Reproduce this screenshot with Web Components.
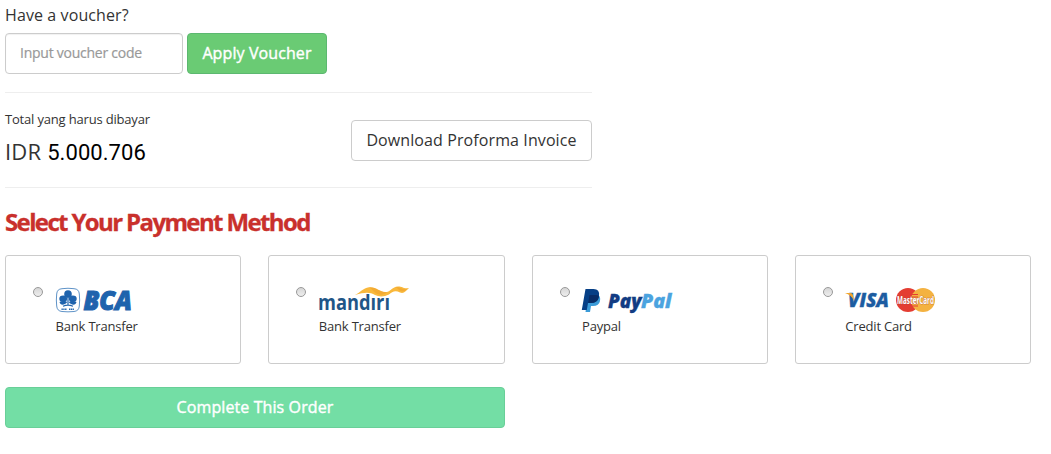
<!DOCTYPE html>
<html lang="id">
<head>
<meta charset="utf-8">
<title>Payment</title>
<style>
  body {
    margin: 0;
    background: #fff;
    color: #333;
    font-family: "Open Sans", "Noto Sans", sans-serif;
    font-size: 16px;
  }
</style>
</head>
<body>
<payment-page></payment-page>

<script>
const define = (name, html) => {
  const template = document.createElement("template");
  template.innerHTML = html;

  customElements.define(name, class extends HTMLElement {
    constructor() {
      super();
      this.root = this.attachShadow({ mode: "open" });
      this.root.appendChild(template.content.cloneNode(true));
    }
  });
};

const logoStyle = /* html */ `
  <style>
    :host {
      display: block;
    }

    svg {
      display: block;
      overflow: visible;
      font-family: "Open Sans", sans-serif;
    }
  </style>
`;

define("action-button", /* html */ `
  <style>
    :host {
      display: block;
      flex: none;
    }

    button {
      display: block;
      width: 100%;
      height: 41px;
      box-sizing: border-box;
      padding: 0 0 2px;
      border: 1px solid var(--button-border, #ccc);
      border-radius: 4px;
      background: var(--button-bg, #fff);
      color: var(--button-color, #333);
      font: inherit;
      letter-spacing: 0.1px;
      white-space: nowrap;
      -webkit-text-stroke: var(--button-stroke, 0);
    }
  </style>
  <button type="button"><slot></slot></button>
`);

define("voucher-form", /* html */ `
  <style>
    :host {
      display: block;
      height: 92px;
    }

    label {
      display: block;
      height: 33px;
      line-height: 30px;
      letter-spacing: 0.1px;
    }

    .row {
      display: flex;
      gap: 4px;
    }

    input {
      width: 178px;
      height: 41px;
      box-sizing: border-box;
      padding: 0 15px 2px 14px;
      border: 1px solid #ccc;
      border-radius: 4px;
      font: inherit;
      font-size: 14px;
      letter-spacing: -0.25px;
      box-shadow: inset 0 1px 1px rgba(0, 0, 0, 0.06);
    }

    input::placeholder {
      color: #999;
      -webkit-text-stroke: 0.2px;
    }

    action-button {
      width: 140px;
      --button-bg: #6acb74;
      --button-border: #5cb870;
      --button-color: #fff;
      --button-stroke: 0.4px;
    }
  </style>
  <label for="code">Have a voucher?</label>
  <div class="row">
    <input id="code" placeholder="Input voucher code">
    <action-button>Apply Voucher</action-button>
  </div>
`);

define("order-total", /* html */ `
  <style>
    :host {
      display: flex;
      justify-content: space-between;
      height: 96px;
      box-sizing: border-box;
      border: solid #eee;
      border-width: 1px 0;
    }

    .label {
      height: 34px;
      margin-top: 17px;
      font-size: 13px;
      letter-spacing: -0.18px;
      line-height: 18px;
    }

    .amount {
      font-size: 22px;
      line-height: 15px;
      letter-spacing: 0.2px;
      white-space: nowrap;
    }

    .amount b {
      color: #000;
      font: 400 22px/15px Roboto, sans-serif;
      letter-spacing: 0.05px;
    }

    action-button {
      width: 241px;
      margin-top: 27px;
    }
  </style>
  <div>
    <div class="label">Total yang harus dibayar</div>
    <div class="amount">IDR <b>5.000.706</b></div>
  </div>
  <action-button>Download Proforma Invoice</action-button>
`);

define("payment-option", /* html */ `
  <style>
    :host {
      display: flex;
      height: 109px;
      box-sizing: border-box;
      padding: 31px 0 0 27px;
      border: 1px solid #ccc;
      border-radius: 3px;
    }

    input {
      appearance: none;
      flex: none;
      width: 10px;
      height: 10px;
      box-sizing: border-box;
      margin: 0;
      border: 1px solid #999;
      border-radius: 50%;
      background: linear-gradient(#d6d6d6, #eee);
    }

    label {
      margin: 1px 0 0 12.6px;
      font-size: 13px;
      letter-spacing: -0.2px;
      line-height: 18px;
    }

    ::slotted(*) {
      height: 29px;
      letter-spacing: 0;
    }
  </style>
  <input type="radio" name="method" id="method">
  <label for="method"><slot name="logo"></slot><slot></slot></label>
`);

define("bca-logo", logoStyle + /* html */ `
  <svg width="80" height="26" viewBox="0 0 80 26" fill="#1f63ad">
    <path d="M6 .7Q12-.2 18 .7Q23 1 23.3 6Q24 12 23.3 18Q23 23 18 23.5Q12 24.2 6 23.5Q1 23 .7 18Q0 12 .7 6Q1 1 6 .7Z" fill="#fff" stroke="#4d87c1" stroke-width=".9"/>
    <circle cx="12" cy="6" r="3.8"/>
    <ellipse cx="7.2" cy="10.7" rx="3.9" ry="3.2"/>
    <ellipse cx="16.8" cy="10.7" rx="3.9" ry="3.2"/>
    <path d="M11.3 14C8 18 4 17 3.5 14C6 12.5 9.5 12.5 11.3 14ZM12.7 14C16 18 20 17 20.5 14C18 12.5 14.5 12.5 12.7 14Z"/>
    <path d="M12 8V17M7 18.3Q12 16 17 18.3" fill="none" stroke="#1f63ad" stroke-width="1.2"/>
    <path d="M5.5 21.2H11M13 21.2H18" stroke="#1f63ad" stroke-width="1.5" stroke-dasharray="1.3 .5"/>
    <text x="27.5" y="21.8" font-size="27" font-weight="800" font-style="italic" textLength="48.5" lengthAdjust="spacingAndGlyphs" stroke="#1f63ad" stroke-width="1.1">BCA</text>
  </svg>
`);

define("mandiri-logo", logoStyle + /* html */ `
  <svg width="92" height="27" viewBox="0 0 92 27">
    <text x="-1" y="22.3" font-size="20.5" font-weight="700" fill="#1f5687" textLength="72" lengthAdjust="spacingAndGlyphs">mandırı</text>
    <path d="M36 7C41 5 44 0 50-.7C58-1.5 61 5 68 4C72 3 73-1 79-1.5C84-1.5 84 1 90 0C87 3 85 6 81 4.5C76 2 73 4 70 6.5C65 9 60 9 56 7C51 4 46 4 36 7Z" fill="#f9b83c"/>
    <path d="M50-.7C58-1 61 5 68 4C64 8 59 7 56 4.5Q53 1 50-.7ZM77-1C82-1 84 3 89 .5Q84 5 80 2Z" fill="#eea12d" opacity=".6"/>
  </svg>
`);

define("paypal-logo", logoStyle + /* html */ `
  <svg width="92" height="27" viewBox="0 0 92 27">
    <path d="M6 6H15Q19 8 18 13Q17 18 11 18H9L8 24H3.5Z" fill="#3b9bd8"/>
    <path d="M3.5 1H11.5Q18 1 17 8Q16 15 8.5 15H6L4.8 22H-.2Z" fill="#063f86"/>
    <path d="M7.5 7H14Q17 7 16.9 9Q15.7 15 9 15H6.2Z" fill="#082c66"/>
    <g font-size="18.5" font-weight="800" font-style="italic" stroke-width=".3">
      <text x="26" y="20" fill="#123c83" stroke="#123c83" textLength="33.5" lengthAdjust="spacingAndGlyphs">Pay</text>
      <text x="59" y="20" fill="#4ba3df" stroke="#4ba3df" textLength="30.5" lengthAdjust="spacingAndGlyphs">Pal</text>
    </g>
  </svg>
`);

define("card-logo", logoStyle + /* html */ `
  <svg width="92" height="27" viewBox="0 0 92 27">
    <text x="3" y="19" font-size="19.5" font-weight="800" font-style="italic" fill="#1c5ca1" stroke="#1c5ca1" stroke-width=".4" textLength="41" lengthAdjust="spacingAndGlyphs">VISA</text>
    <path d="M0 5H5.5Q7.5 5 7.9 7L9.2 13Q6.5 7 0 5Z" fill="#f2a52c"/>
    <circle cx="63" cy="12" r="12" fill="#e43d32"/>
    <circle cx="78" cy="12" r="12" fill="#f4b241"/>
    <path d="M67 6.5H73M66.5 9H73M66.5 15.5H73M67 18H73" stroke="#e43d32" stroke-width="1.1"/>
    <text x="52" y="15.5" font-size="10" font-weight="700" fill="#fff" stroke="#a5453a" stroke-width=".6" paint-order="stroke" textLength="37" lengthAdjust="spacingAndGlyphs">MasterCard</text>
  </svg>
`);

define("payment-page", /* html */ `
  <style>
    :host {
      display: block;
      height: 454px;
      box-sizing: border-box;
      padding-left: 5px;
      overflow: hidden;
    }

    order-total {
      width: 587px;
    }

    h2 {
      height: 67px;
      margin: 0;
      color: #c9302c;
      font-size: 24px;
      line-height: 67px;
      letter-spacing: -1.63px;
      -webkit-text-stroke: 0.3px;
    }

    .options {
      display: grid;
      grid-template-columns: repeat(4, 1fr);
      gap: 27px;
      width: 1026px;
    }

    .complete {
      width: 500px;
      margin-top: 23px;
      --button-bg: #73dea5;
      --button-border: #69cf98;
      --button-color: #fff;
      --button-stroke: 0.4px;
    }
  </style>
  <voucher-form></voucher-form>
  <order-total></order-total>
  <h2>Select Your Payment Method</h2>
  <div class="options">
    <payment-option><bca-logo slot="logo"></bca-logo>Bank Transfer</payment-option>
    <payment-option><mandiri-logo slot="logo"></mandiri-logo>Bank Transfer</payment-option>
    <payment-option><paypal-logo slot="logo"></paypal-logo>Paypal</payment-option>
    <payment-option><card-logo slot="logo"></card-logo>Credit Card</payment-option>
  </div>
  <action-button class="complete">Complete This Order</action-button>
`);
</script>
</body>
</html>
